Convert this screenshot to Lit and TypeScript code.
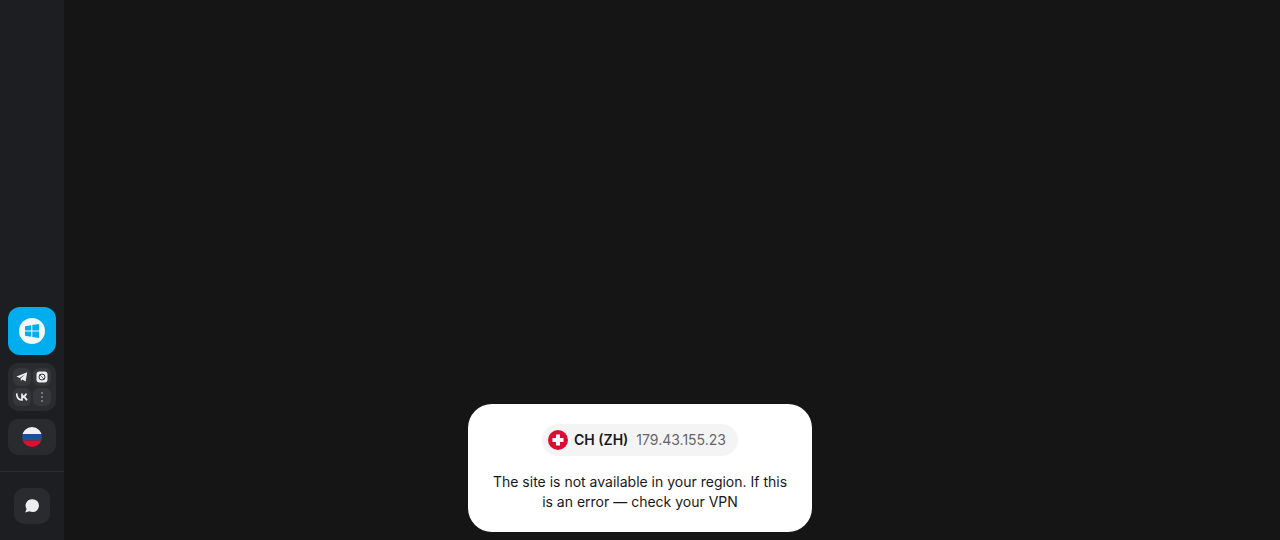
import { LitElement, html, css } from "lit";
import { customElement } from "lit/decorators.js";

@customElement("app-root")
export class AppRoot extends LitElement {
  static styles = css`
    :host { display: block; height: 540px; font-family: Inter, "Liberation Sans", sans-serif; }
    .page { position: relative; display: flex; height: 540px; background: #151515; overflow: hidden; }
    .side { width: 64px; flex: none; box-sizing: border-box; background: #1c1e21; display: flex; flex-direction: column; justify-content: flex-end; align-items: center; padding-bottom: 16px; }
    .win { width: 48px; height: 48px; border-radius: 12px; background: #00aeef; display: flex; align-items: center; justify-content: center; margin-bottom: 8px; }
    .disc { width: 26px; height: 26px; border-radius: 50%; background: #f4f6f8; display: flex; align-items: center; justify-content: center; }
    .social { width: 48px; height: 48px; box-sizing: border-box; border-radius: 10px; background: #2a2b2f; padding: 5px; display: grid; grid-template-columns: 18px 18px; grid-template-rows: 18px 18px; gap: 2px; margin-bottom: 8px; }
    .cell { border-radius: 6px; background: #36373c; display: flex; align-items: center; justify-content: center; }
    .lang { width: 48px; height: 36px; border-radius: 10px; background: #2a2b2f; display: flex; align-items: center; justify-content: center; }
    .rule { align-self: stretch; height: 1px; background: #2a2b2f; margin: 16px 0 16px; }
    .chat { width: 36px; height: 36px; border-radius: 10px; background: #2a2b2f; display: flex; align-items: center; justify-content: center; }
    .toast { position: absolute; left: 468px; bottom: 8px; width: 344px; box-sizing: border-box; background: #fff; border-radius: 24px; padding: 20px; display: flex; flex-direction: column; align-items: center; gap: 16px; }
    .pill { height: 32px; box-sizing: border-box; border-radius: 16px; background: #f4f4f5; padding: 0 12px 0 6px; display: flex; align-items: center; font-size: 14px; line-height: 20px; }
    .code { font-weight: 600; color: #18181b; margin-left: 6px; }
    .ip { color: #666669; margin-left: 8px; }
    .msg { margin: 0; font-size: 14px; line-height: 20px; color: #18181b; text-align: center; }
    svg { display: block; }
  `;

  render() {
    return html`<div class="page">
      <aside class="side">
        <div class="win"><div class="disc">
          <svg width="14" height="14" viewBox="0 0 14 14" fill="#00aeef"><path d="M0 2.2 6.2 1.2V6.5H0ZM7.3 1 14 0V6.5H7.3ZM0 7.5H6.2V12.8L0 11.8ZM7.3 7.5H14V14L7.3 13Z"/></svg>
        </div></div>
        <div class="social">
          <div class="cell"><svg width="12" height="12" viewBox="0 0 12 12" fill="#eceef0"><path d="M.5 5.6 11.2 1.2 9.6 10.6 6.4 8.4 4.9 9.9 4.6 7.4 9 3.4 3.6 6.9Z"/></svg></div>
          <div class="cell"><svg width="12" height="12" viewBox="0 0 12 12"><rect x=".5" y=".5" width="11" height="11" rx="3" fill="#eceef0"/><circle cx="6" cy="6" r="3" fill="none" stroke="#36373c" stroke-width="1"/><path d="M3.6 3.6 8.4 8.4" stroke="#36373c" stroke-width=".7"/></svg></div>
          <div class="cell"><svg width="12" height="8" viewBox="0 0 12 8" fill="none" stroke="#eceef0" stroke-width="1.7"><path d="M.6 .4C.8 4.6 2.8 7 6 7V.4M6 3.7C8 3.7 9.6 2.6 10.3.4M6 3.7C8.2 3.9 10 5.2 10.9 7.4"/></svg></div>
          <div class="cell"><svg width="4" height="12" viewBox="0 0 4 12" fill="#8b8d92"><circle cx="2" cy="2" r="1"/><circle cx="2" cy="6" r="1"/><circle cx="2" cy="10" r="1"/></svg></div>
        </div>
        <div class="lang">
          <svg width="20" height="20" viewBox="0 0 20 20"><defs><clipPath id="r"><circle cx="10" cy="10" r="10"/></clipPath></defs><g clip-path="url(#r)"><rect width="20" height="7" fill="#eef0f5"/><rect y="7" width="20" height="6.5" fill="#1c4f9f"/><rect y="13.5" width="20" height="6.5" fill="#dc0f32"/></g></svg>
        </div>
        <div class="rule"></div>
        <div class="chat">
          <svg width="16" height="16" viewBox="0 0 16 16" fill="#eceef0"><path d="M8.6 1.2A6.4 6.4 0 0 1 8.6 14C7.4 14 6.3 13.7 5.4 13.2L1.2 14.6 2.6 11A6.4 6.4 0 0 1 8.6 1.2Z"/></svg>
        </div>
      </aside>
      <div class="toast">
        <div class="pill">
          <svg width="20" height="20" viewBox="0 0 20 20"><circle cx="10" cy="10" r="10" fill="#d80f35"/><path d="M8 4.5H12V8H15.5V12H12V15.5H8V12H4.5V8H8Z" fill="#fff"/></svg>
          <span class="code">CH (ZH)</span><span class="ip">179.43.155.23</span>
        </div>
        <p class="msg">The site is not available in your region. If this is an error — check your VPN</p>
      </div>
    </div>`;
  }
}
